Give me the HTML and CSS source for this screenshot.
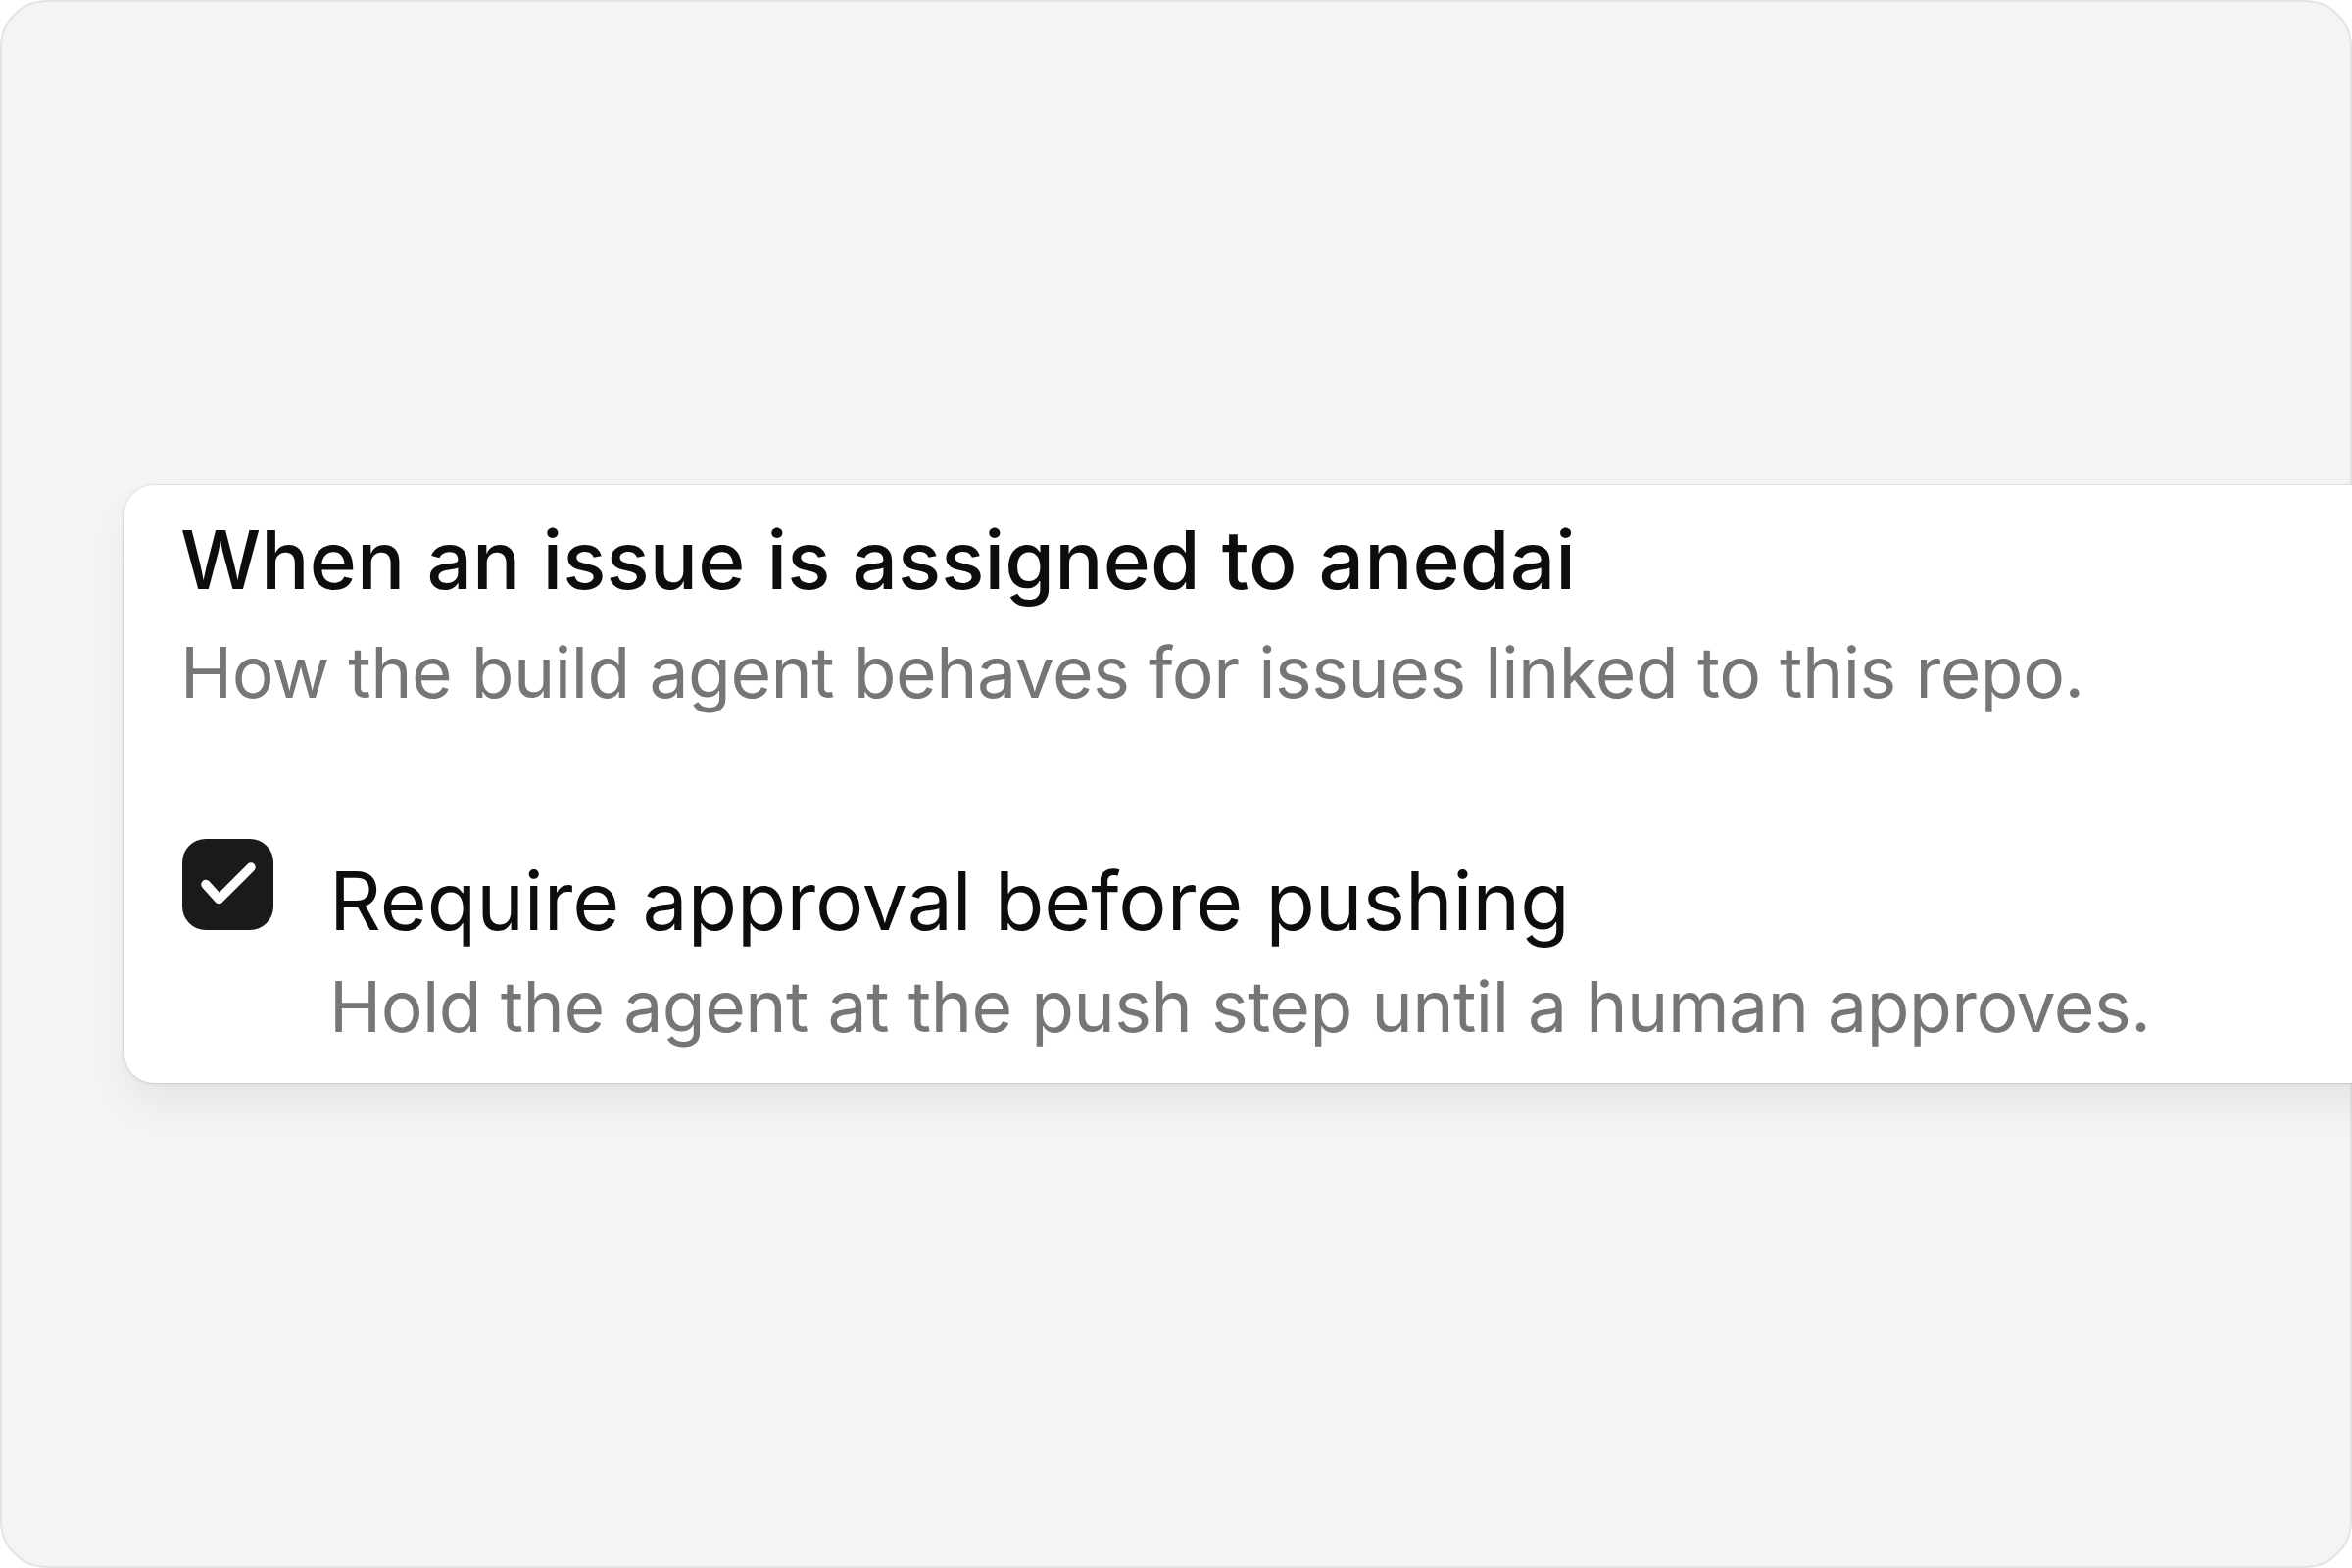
FILE: index.html
```html
<!DOCTYPE html>
<html lang="en">
<head>
<meta charset="utf-8">
<title>Build agent settings</title>
<link rel="stylesheet" href="styles.css">
</head>
<body>
<div class="frame">
  <section class="card">
    <h2 class="card-title">When an issue is assigned to anedai</h2>
    <p class="card-subtitle">How the build agent behaves for issues linked to this repo.</p>
    <div class="option">
      <span class="checkbox" role="checkbox" aria-checked="true">
        <svg viewBox="0 0 93 93" width="93" height="93" aria-hidden="true">
          <path d="M24 46.5 L37.5 61.5 L70 29" fill="none" stroke="#ffffff" stroke-width="9.5" stroke-linecap="round" stroke-linejoin="round"/>
        </svg>
      </span>
      <div class="option-text">
        <div class="option-label">Require approval before pushing</div>
        <div class="option-desc">Hold the agent at the push step until a human approves.</div>
      </div>
    </div>
  </section>
</div>
</body>
</html>
```

FILE: styles.css
```css
html, body {
  margin: 0;
  padding: 0;
  background: #ffffff;
  overflow: hidden;
}

body {
  font-family: "Inter", "Noto Sans", "Liberation Sans", sans-serif;
}

.frame {
  box-sizing: border-box;
  width: 2400px;
  height: 1600px;
  border: 2px solid #e3e3e3;
  border-radius: 48px;
  background: #f4f4f4;
  display: flex;
  align-items: center;
  padding-left: 125px;
}

.card {
  flex: 0 0 auto;
  width: 2400px;
  box-sizing: border-box;
  padding: 28px 0 34px 57px;
  background: #ffffff;
  border-radius: 30px;
  box-shadow:
    0 0 0 1px rgba(0, 0, 0, 0.07),
    0 2px 4px rgba(0, 0, 0, 0.05),
    0 24px 48px -6px rgba(0, 0, 0, 0.07);
}

.card-title {
  margin: 0;
  font-size: 82px;
  line-height: 1.2;
  font-weight: 500;
  letter-spacing: 0.1px;
  color: #0d0d0d;
}

.card-subtitle {
  margin: 22.7px 0 0;
  font-size: 71.5px;
  line-height: 1.2;
  font-weight: 400;
  letter-spacing: -0.5px;
  color: #767676;
}

.option {
  display: flex;
  align-items: flex-start;
  gap: 57px;
  margin-top: 125.4px;
}

.checkbox {
  flex: 0 0 auto;
  width: 93px;
  height: 93px;
  margin-left: 2px;
  border-radius: 24px;
  background: #1a1a1a;
  display: flex;
}

.option-text {
  padding-top: 14.3px;
}

.option-label {
  font-size: 82.3px;
  line-height: 1.2;
  font-weight: 400;
  color: #0d0d0d;
}

.option-desc {
  margin-top: 16.3px;
  font-size: 71.5px;
  line-height: 1.2;
  font-weight: 400;
  letter-spacing: -0.5px;
  color: #767676;
}
```
